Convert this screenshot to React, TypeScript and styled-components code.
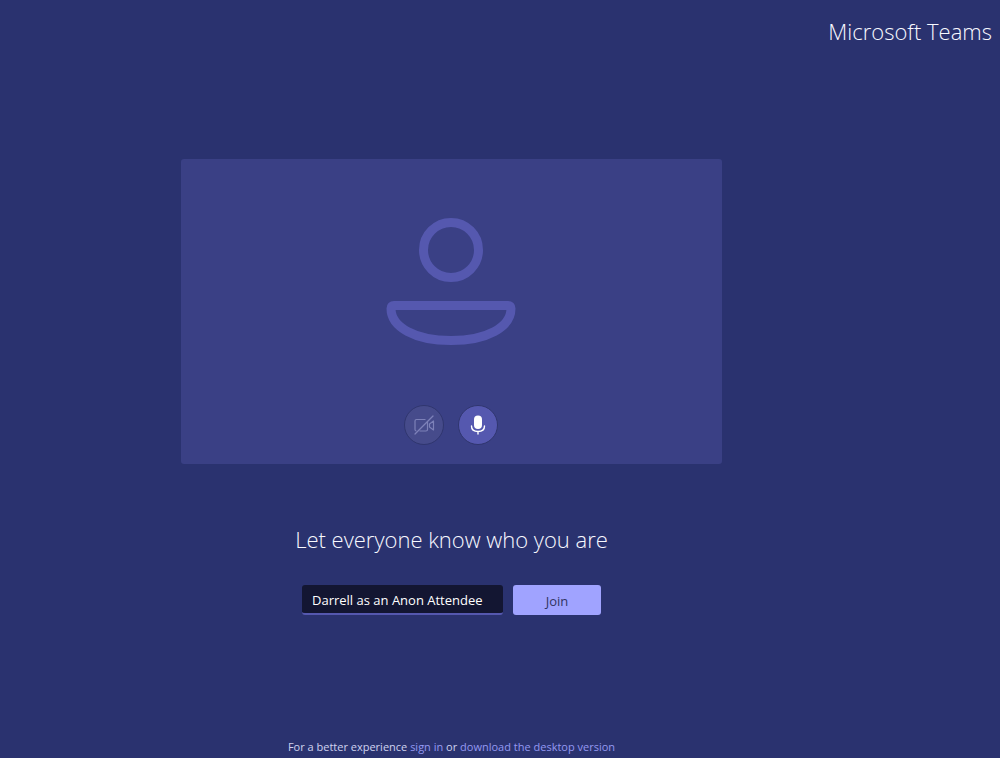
import React, { useState } from "react";
import styled, { createGlobalStyle } from "styled-components";

const GlobalStyle = createGlobalStyle`
  *, *::before, *::after { box-sizing: border-box; }
  body {
    margin: 0;
    background: #2a326f;
    color: #f8f9ff;
    font-family: "Segoe UI", "Open Sans", "Noto Sans", sans-serif;
  }
`;

const Page = styled.div`
  display: flex;
  flex-direction: column;
  min-height: 100vh;
`;

const Header = styled.header`
  display: flex;
  justify-content: flex-end;
  padding: 15px 8px;
`;

const Brand = styled.div`
  font-size: 22px;
  font-weight: 300;
  line-height: 32px;
`;

const Main = styled.main`
  flex: 1;
  display: flex;
  flex-direction: column;
  align-items: center;
  padding: 97px 97px 0 0;
`;

const Preview = styled.section`
  display: flex;
  flex-direction: column;
  align-items: center;
  justify-content: space-between;
  width: 60%;
  aspect-ratio: 16 / 9;
  padding: 59px 0 19px;
  border-radius: 3px;
  background: #3a4085;
`;

const Avatar = styled.svg`
  width: 130px;
  height: 128px;
  fill: none;
  stroke: #5558af;
  stroke-width: 9;
`;

const Controls = styled.div`
  display: flex;
  gap: 14px;
`;

const RoundButton = styled.button<{ $active?: boolean }>`
  display: flex;
  align-items: center;
  justify-content: center;
  width: 40px;
  height: 40px;
  padding: 0;
  border: 1px solid #30366f;
  border-radius: 50%;
  background: ${(p) => (p.$active ? "#5558af" : "#464b8b")};
  color: ${(p) => (p.$active ? "#ffffff" : "#7d81b8")};
`;

const JoinForm = styled.form`
  display: flex;
  flex-direction: column;
  align-items: center;
  gap: 30px;
  margin-top: 59px;
`;

const Title = styled.label`
  font-size: 22px;
  font-weight: 300;
  line-height: 32px;
`;

const Fields = styled.div`
  display: flex;
  gap: 10px;
`;

const NameInput = styled.input`
  width: 201px;
  height: 30px;
  padding: 3px 10px 0;
  border: 0;
  border-bottom: 2px solid #5558af;
  border-radius: 3px;
  background: #131632;
  color: #ffffff;
  font: inherit;
  font-size: 13px;
  outline: none;
`;

const JoinButton = styled.button`
  width: 88px;
  height: 30px;
  padding: 2px 0 0;
  border: 0;
  border-radius: 3px;
  background: #a0a3ff;
  color: #30335f;
  font: inherit;
  font-size: 13px;
`;

const Footer = styled.footer`
  padding: 0 97px 3px 0;
  color: #cfd3f0;
  font-size: 11px;
  line-height: 16px;
  text-align: center;
`;

const Link = styled.a`
  color: #9499f2;
  text-decoration: none;
`;

const CameraOffIcon = () => (
  <svg width="22" height="22" viewBox="0 0 22 22" fill="none" stroke="currentColor" strokeWidth="1.2" strokeLinejoin="round" aria-hidden="true">
    <path d="M12.500 5.500H3.500Q2 5.500 2 7V15.500Q2 17 3.500 17M6.500 17H13Q14.500 17 14.500 15.500V8" />
    <path d="M16.500 10 20.500 7v9l-4-3z" />
    <path d="M2 20 20 2" strokeLinecap="round" />
  </svg>
);

const MicIcon = () => (
  <svg width="22" height="22" viewBox="0 0 22 22" fill="none" stroke="currentColor" strokeLinecap="round" aria-hidden="true">
    <rect x="7" y="1.500" width="8" height="13.500" rx="4" fill="currentColor" stroke="none" />
    <path d="M4.500 12c0 3.500 2.800 5.500 6.500 5.500s6.500-2 6.500-5.500M11 17.500v2.500" strokeWidth="1.400" />
  </svg>
);

export default function App() {
  const [name, setName] = useState("Darrell as an Anon Attendee");
  return (
    <>
      <GlobalStyle />
      <Page>
        <Header>
          <Brand>Microsoft Teams</Brand>
        </Header>
        <Main>
          <Preview aria-label="Video preview">
            <Avatar viewBox="0 0 130 128" aria-hidden="true">
              <circle cx="65" cy="32" r="27.500" />
              <path d="M8 87.500H122Q125 87.500 125 90.500C125 109 101 122.500 65 122.500S5 109 5 90.500Q5 87.500 8 87.500Z" />
            </Avatar>
            <Controls>
              <RoundButton type="button" aria-label="Camera off" disabled>
                <CameraOffIcon />
              </RoundButton>
              <RoundButton type="button" aria-label="Microphone" $active>
                <MicIcon />
              </RoundButton>
            </Controls>
          </Preview>
          <JoinForm onSubmit={(e) => e.preventDefault()}>
            <Title htmlFor="display-name">Let everyone know who you are</Title>
            <Fields>
              <NameInput id="display-name" value={name} onChange={(e) => setName(e.target.value)} />
              <JoinButton type="submit">Join</JoinButton>
            </Fields>
          </JoinForm>
        </Main>
        <Footer>
          For a better experience <Link href="#sign-in">sign in</Link> or{" "}
          <Link href="#download">download the desktop version</Link>
        </Footer>
      </Page>
    </>
  );
}
